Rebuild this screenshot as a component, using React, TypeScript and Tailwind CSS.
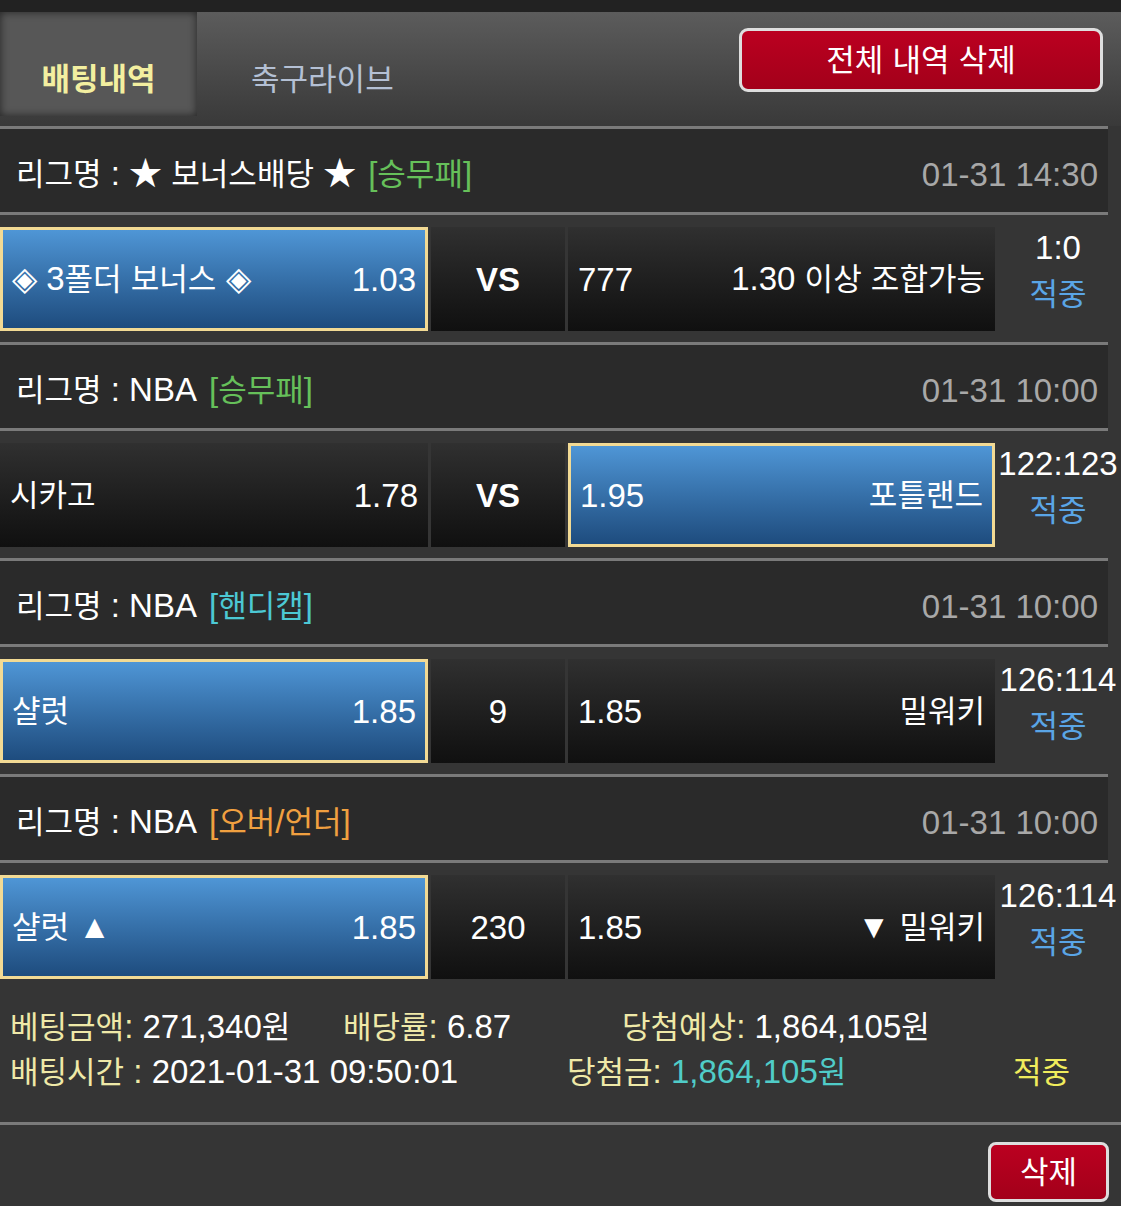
import { Fragment } from "react";

type Pick = "home" | "away";

interface Bet {
  league: string;
  type: string;
  typeColor: string;
  date: string;
  home: string;
  homeOdds: string;
  mid: string;
  midBold?: boolean;
  awayOdds: string;
  away: string;
  pick: Pick;
  score: string;
}

const BETS: Bet[] = [
  {
    league: "★ 보너스배당 ★",
    type: "[승무패]",
    typeColor: "text-[#66c05a]",
    date: "01-31 14:30",
    home: "◈ 3폴더 보너스 ◈",
    homeOdds: "1.03",
    mid: "VS",
    midBold: true,
    awayOdds: "777",
    away: "1.30 이상 조합가능",
    pick: "home",
    score: "1:0",
  },
  {
    league: "NBA",
    type: "[승무패]",
    typeColor: "text-[#66c05a]",
    date: "01-31 10:00",
    home: "시카고",
    homeOdds: "1.78",
    mid: "VS",
    midBold: true,
    awayOdds: "1.95",
    away: "포틀랜드",
    pick: "away",
    score: "122:123",
  },
  {
    league: "NBA",
    type: "[핸디캡]",
    typeColor: "text-[#4cc8d4]",
    date: "01-31 10:00",
    home: "샬럿",
    homeOdds: "1.85",
    mid: "9",
    awayOdds: "1.85",
    away: "밀워키",
    pick: "home",
    score: "126:114",
  },
  {
    league: "NBA",
    type: "[오버/언더]",
    typeColor: "text-[#f0a040]",
    date: "01-31 10:00",
    home: "샬럿 ▲",
    homeOdds: "1.85",
    mid: "230",
    awayOdds: "1.85",
    away: "▼ 밀워키",
    pick: "home",
    score: "126:114",
  },
];

// hangul glyphs in Noto CJK run a bit wide next to the latin digits, scale them down a touch
function K({ text }: { text: string }) {
  const parts = text.split(/([\uAC00-\uD7A3]+)/);
  return (
    <span>
      {parts.map((p, i) =>
        /[\uAC00-\uD7A3]/.test(p) ? (
          <span key={i} className="text-[0.94em]">
            {p}
          </span>
        ) : (
          <Fragment key={i}>{p}</Fragment>
        ),
      )}
    </span>
  );
}

function Line({ full }: { full?: boolean }) {
  return <div className={full ? "h-[3px] w-full bg-[#7a7a7a]" : "h-[3px] w-[1108px] bg-[#7a7a7a]"} />;
}

function Cell({ selected, left, right, width }: { selected: boolean; left: string; right: string; width: string }) {
  return (
    <div
      className={
        selected
          ? `${width} flex h-[104px] items-center justify-between border-[3px] border-[#f2da94] bg-gradient-to-b from-[#4f96d6] to-[#1e4c7e] px-[9px] text-white`
          : `${width} flex h-[104px] items-center justify-between bg-gradient-to-b from-[#303030] to-[#101010] px-[10px] text-white`
      }
    >
      <span className="whitespace-nowrap">
        <K text={left} />
      </span>
      <span className="whitespace-nowrap">
        <K text={right} />
      </span>
    </div>
  );
}

function BetBlock({ bet }: { bet: Bet }) {
  return (
    <div>
      <Line />
      {/* league header */}
      <div className="flex h-[83px] w-[1108px] items-center justify-between bg-[#2a2a2a] pl-[16px] pr-[10px] pt-[7px]">
        <div className="whitespace-nowrap text-white">
          <K text={`리그명 : ${bet.league}`} />
          <span className={`ml-[12px] ${bet.typeColor}`}>
            <K text={bet.type} />
          </span>
        </div>
        <div className="text-[#a8a8a8]">{bet.date}</div>
      </div>
      <Line />
      {/* match row */}
      <div className="flex h-[127px] gap-[3px] pt-[12px]">
        <Cell selected={bet.pick === "home"} left={bet.home} right={bet.homeOdds} width="w-[428px]" />
        <div
          className={`flex h-[104px] w-[134px] items-center justify-center bg-gradient-to-b from-[#303030] to-[#101010] text-white ${
            bet.midBold ? "font-bold" : ""
          }`}
        >
          {bet.mid}
        </div>
        <Cell selected={bet.pick === "away"} left={bet.awayOdds} right={bet.away} width="w-[427px]" />
        <div className="-ml-[3px] flex h-[104px] w-[126px] flex-col items-center">
          <div className="h-[42px] leading-[42px] text-white">{bet.score}</div>
          <div className="h-[50px] leading-[50px] text-[#5aa5e6]">
            <K text="적중" />
          </div>
        </div>
      </div>
    </div>
  );
}

export default function App() {
  return (
    <div className="min-h-[1206px] w-[1121px] bg-[#353535] font-['Liberation_Sans','Noto_Sans_CJK_KR',sans-serif] text-[33px] leading-none">
      <div className="h-[12px] bg-[#222]" />
      {/* tabs */}
      <div className="flex h-[114px] justify-between bg-gradient-to-b from-[#5c5c5c] via-[#4a4a4a] to-[#393939]">
        <div className="flex items-start">
          <div className="flex h-[104px] w-[197px] items-center justify-center bg-[#575757] pt-[30px] font-bold text-[#f3efa0] shadow-[inset_0_0_8px_rgba(0,0,0,0.6)]">
            <K text="배팅내역" />
          </div>
          <div className="flex h-[104px] items-center pl-[54px] pt-[30px] text-[#b4c0d4]">
            <K text="축구라이브" />
          </div>
        </div>
        <button className="mr-[18px] mt-[16px] flex h-[64px] w-[364px] items-center justify-center rounded-[9px] border-[3px] border-[#dedede] bg-gradient-to-b from-[#bb0020] to-[#a3001a] text-white">
          <K text="전체 내역 삭제" />
        </button>
      </div>

      {BETS.map((bet, i) => (
        <BetBlock key={i} bet={bet} />
      ))}

      {/* summary */}
      <div className="h-[132px] pl-[10px] pt-[14px] text-white">
        <div className="flex h-[45px] items-center whitespace-nowrap">
          <div className="w-[333px]">
            <span className="text-[#efe9a8]">
              <K text="베팅금액:" />
            </span>{" "}
            <K text="271,340원" />
          </div>
          <div className="w-[279px]">
            <span className="text-[#efe9a8]">
              <K text="배당률:" />
            </span>{" "}
            6.87
          </div>
          <div>
            <span className="text-[#efe9a8]">
              <K text="당첨예상:" />
            </span>{" "}
            <K text="1,864,105원" />
          </div>
        </div>
        <div className="flex h-[45px] items-center whitespace-nowrap">
          <div className="w-[557px]">
            <span className="text-[#efe9a8]">
              <K text="배팅시간 :" />
            </span>{" "}
            2021-01-31 09:50:01
          </div>
          <div className="w-[446px]">
            <span className="text-[#efe9a8]">
              <K text="당첨금:" />
            </span>{" "}
            <span className="text-[#50ccc8]">
              <K text="1,864,105원" />
            </span>
          </div>
          <div className="text-[#f0ec5c]">
            <K text="적중" />
          </div>
        </div>
      </div>
      <Line full />
      <div className="flex justify-end pr-[12px] pt-[17px]">
        <button className="flex h-[60px] w-[121px] items-center justify-center rounded-[8px] border-[3px] border-[#dedede] bg-gradient-to-b from-[#bb0020] to-[#a3001a] text-white">
          <K text="삭제" />
        </button>
      </div>
    </div>
  );
}
